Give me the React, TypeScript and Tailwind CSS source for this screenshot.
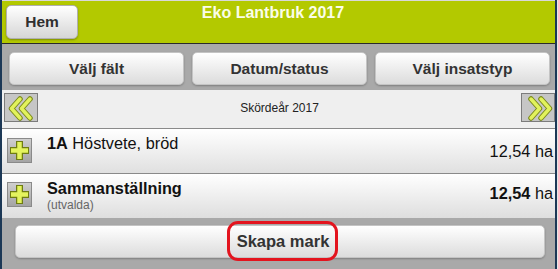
import React from "react";

const Chevrons = ({ dir }: { dir: "left" | "right" }) => {
  const d =
    dir === "left"
      ? ["M15 5 L6.5 14.5 L15 24", "M25 5 L16.5 14.5 L25 24"]
      : ["M9 5 L17.5 14.5 L9 24", "M19 5 L27.5 14.5 L19 24"];
  return (
    <svg width="32" height="27" viewBox="0 0 32 27" className="block">
      {d.map((p, i) => (
        <path key={"o" + i} d={p} fill="none" stroke="#7a8a1a" strokeWidth="5.5" strokeLinecap="round" strokeLinejoin="round" />
      ))}
      {d.map((p, i) => (
        <path key={"i" + i} d={p} fill="none" stroke="#e2f25c" strokeWidth="3.5" strokeLinecap="round" strokeLinejoin="round" />
      ))}
    </svg>
  );
};

const NavBox = ({ dir }: { dir: "left" | "right" }) => (
  <div className="w-[34px] h-[29px] bg-[#c6c6c6] border border-[#7c7c7c] flex items-center justify-center">
    <Chevrons dir={dir} />
  </div>
);

const PlusBox = () => (
  <div className="w-[25px] h-[25px] border border-[#8a8a8a] bg-gradient-to-b from-[#cfcfcf] to-[#a4a4a4] flex items-center justify-center shrink-0">
    <svg width="23" height="23" viewBox="0 0 23 23" className="block">
      <path d="M11.5 2 V21 M2 11.5 H21" stroke="#6f7d12" strokeWidth="7" fill="none" />
      <path d="M11.5 3 V20 M3 11.5 H20" stroke="#e4f45e" strokeWidth="4.5" fill="none" />
    </svg>
  </div>
);

const Btn = ({ children, className = "" }: { children: React.ReactNode; className?: string }) => (
  <div
    className={
      "h-[33px] rounded-[5px] border border-[#c4c4c4] bg-gradient-to-b from-[#ffffff] to-[#dcdcdc] shadow-[0_1px_2px_rgba(0,0,0,0.25)] flex items-center justify-center font-bold text-[#333] " +
      className
    }
  >
    {children}
  </div>
);

export default function App() {
  return (
    <div className="w-[558px] h-[269px] overflow-hidden bg-[#e6e6e6] font-['Liberation_Sans',Arial,sans-serif]">
      <div className="w-[557px] h-[269px] border-l-2 border-r-2 border-[#1c3856] flex flex-col">
        <div className="h-[1px] bg-[#d8d8d8] shrink-0" />
        {/* Header */}
        <div className="h-[43px] shrink-0 bg-[#b3c900] border-b border-[#2a2a2a] flex items-start">
          <div className="ml-[4px] mt-[4px] w-[72px] h-[34px] rounded-[5px] border border-[#b0b0b0] bg-gradient-to-b from-[#ffffff] to-[#d6d6d6] shadow-[0_1px_2px_rgba(0,0,0,0.3)] flex items-center justify-center text-[15.5px] font-bold text-[#2f2f2f]">
            Hem
          </div>
          <div className="flex-1 pr-[87px] pt-[3px] text-center text-[16px] leading-[18px] font-bold text-[#fbfde8]">
            Eko Lantbruk 2017
          </div>
        </div>
        {/* Button band */}
        <div className="h-[46px] shrink-0 bg-[#a9a9a9] pl-[7px] pr-[5px] pt-[8px] grid grid-cols-3 gap-[8px] items-start">
          <Btn className="text-[15.5px]">Välj fält</Btn>
          <Btn className="text-[15.5px]">Datum/status</Btn>
          <Btn className="text-[15.5px]">Välj insatstyp</Btn>
        </div>
        {/* Nav row */}
        <div className="h-[39px] shrink-0 bg-[#efefef] border-b border-[#8a8a8a] flex items-start pt-[3px] pl-[2px]">
          <NavBox dir="left" />
          <div className="flex-1 text-center text-[12px] leading-[14px] text-[#222] pt-[8px]">Skördeår 2017</div>
          <NavBox dir="right" />
        </div>
        {/* Row 1 */}
        <div className="h-[45px] shrink-0 bg-gradient-to-b from-[#ffffff] to-[#e0e0e0] border-b border-[#8a8a8a] flex items-start">
          <div className="ml-[5px] mt-[9px]">
            <PlusBox />
          </div>
          <div className="ml-[15px] pt-[5px] text-[16.3px] leading-[18px] text-[#111]">
            <span className="font-bold">1A</span> Höstvete, bröd
          </div>
          <div className="ml-auto pr-[2px] pt-[13px] text-[16.3px] leading-[18px] text-[#111]">12,54 ha</div>
        </div>
        {/* Row 2 */}
        <div className="h-[44px] shrink-0 bg-gradient-to-b from-[#ffffff] to-[#dedede] flex items-start">
          <div className="ml-[5px] mt-[8px]">
            <PlusBox />
          </div>
          <div className="ml-[15px] pt-[5px]">
            <div className="text-[16.3px] leading-[18px] font-bold text-[#111]">Sammanställning</div>
            <div className="text-[12px] leading-[14px] text-[#666] mt-[1px]">(utvalda)</div>
          </div>
          <div className="ml-auto pr-[2px] pt-[10px] text-[16.3px] leading-[18px] text-[#111]">
            <span className="font-bold">12,54</span> ha
          </div>
        </div>
        {/* Footer */}
        <div className="flex-1 bg-[#a9a9a9] pt-[7px] pl-[13px]">
          <div className="relative w-[530px]">
            <Btn className="text-[16.5px] text-[#2a2a2a]">
              <span className="pl-[6px]">Skapa mark</span>
            </Btn>
            <div className="absolute left-[212px] top-[-4px] w-[111px] h-[40px] border-[3.5px] border-[#e3141e] rounded-[11px]" />
          </div>
        </div>
      </div>
    </div>
  );
}
